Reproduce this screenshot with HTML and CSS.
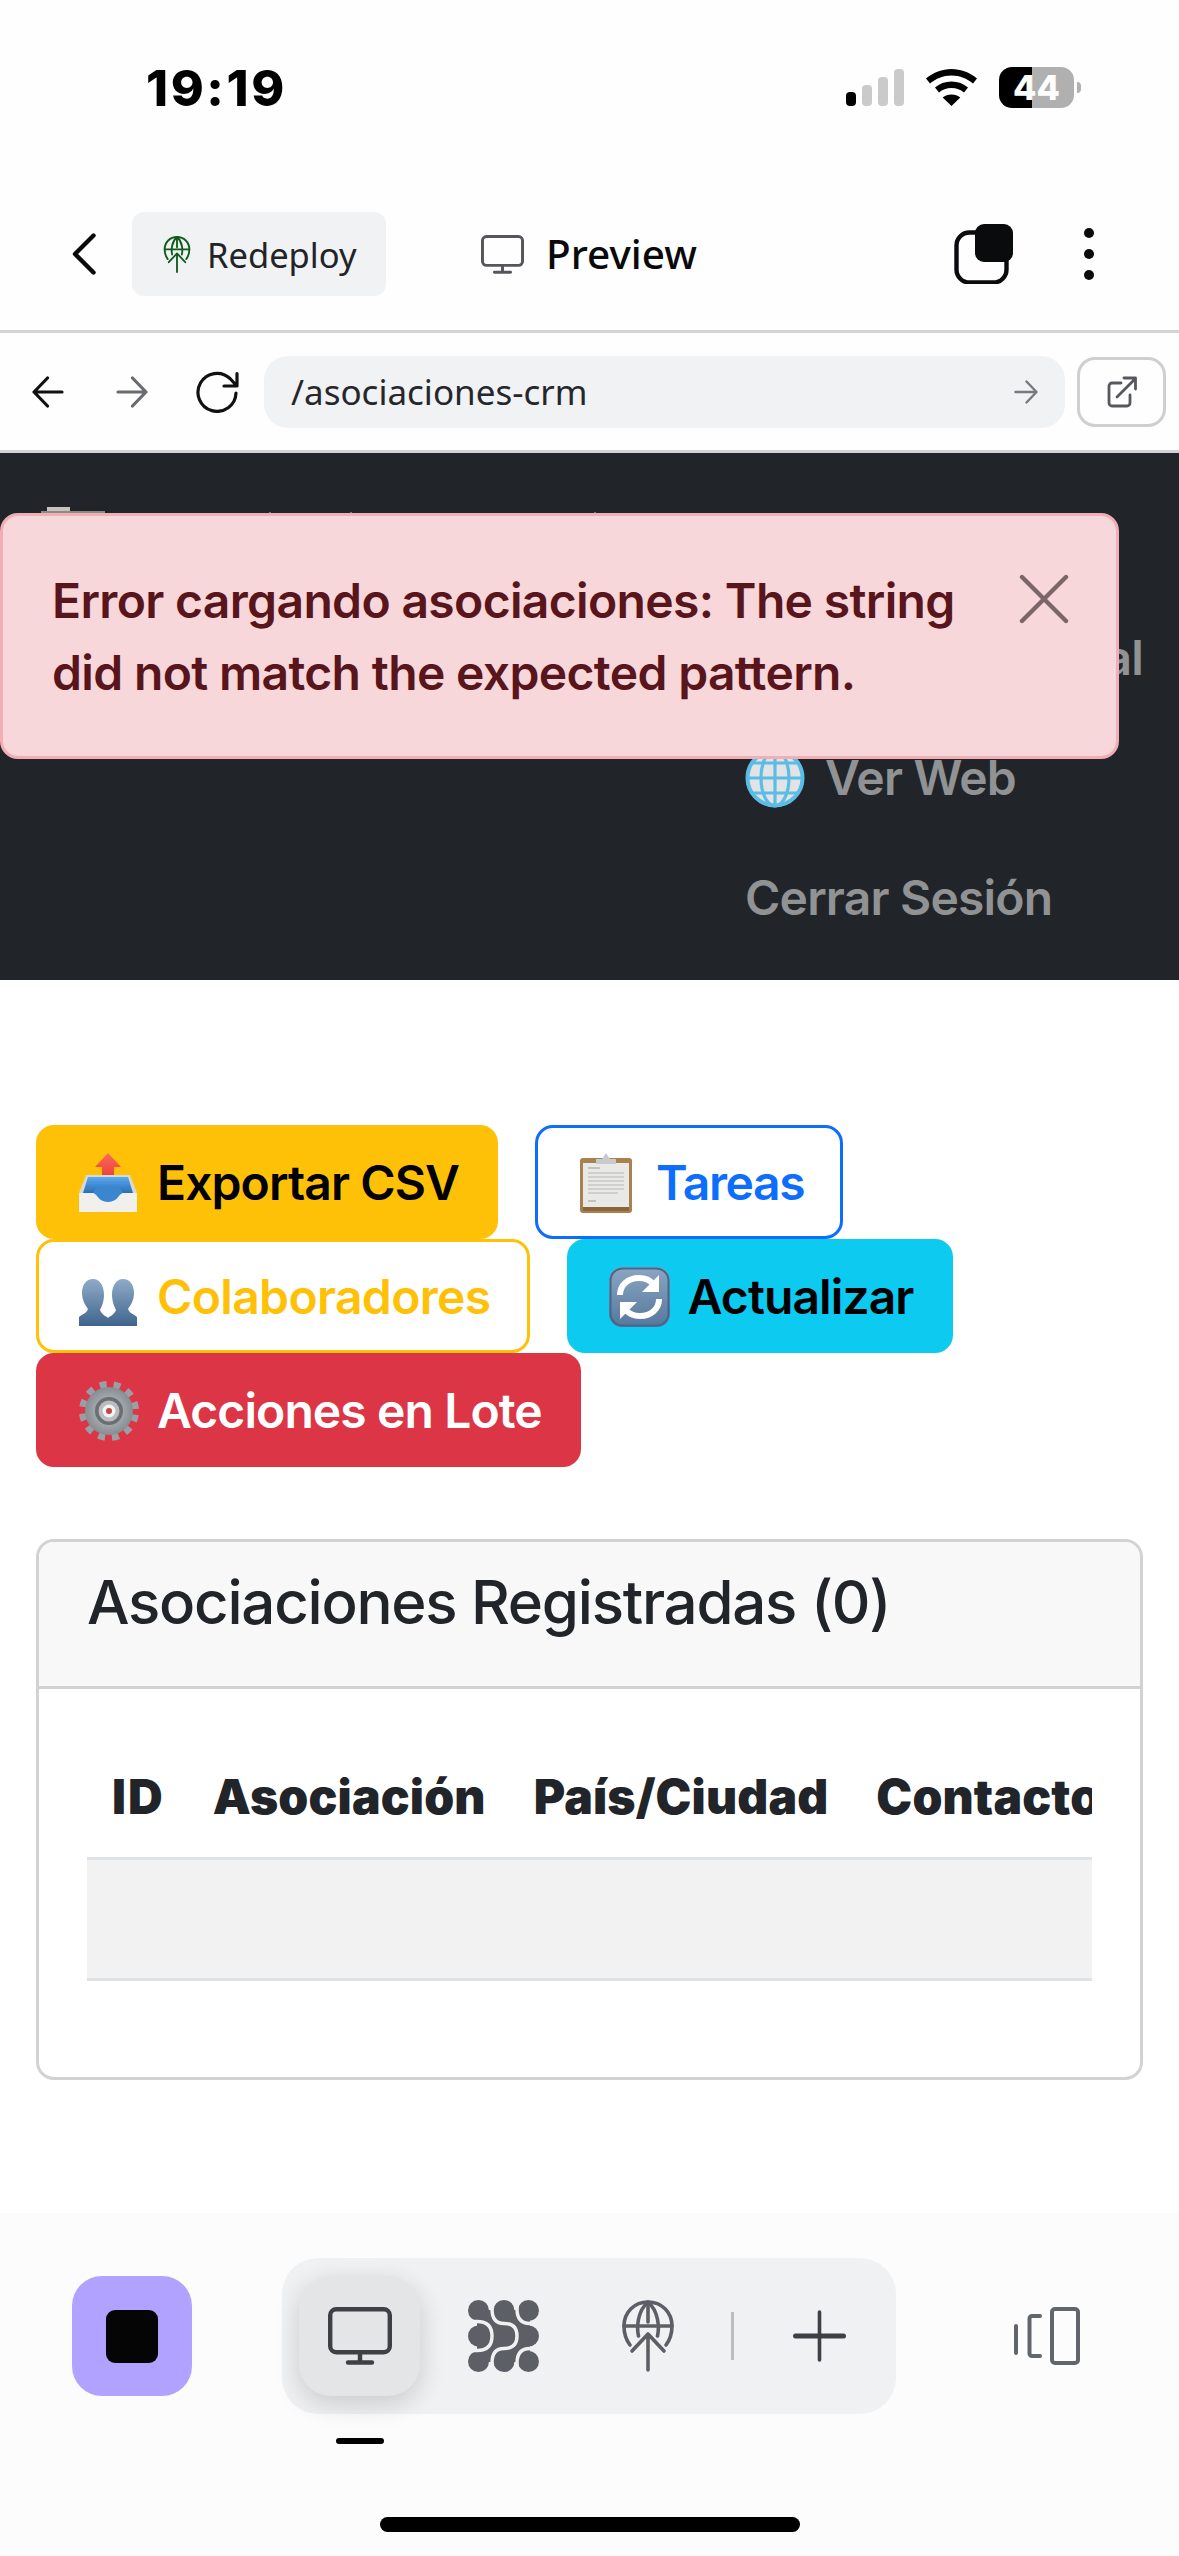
FILE: index.html
```html
<!DOCTYPE html>
<html lang="es">
<head>
<meta charset="utf-8">
<title>Asociaciones CRM</title>
<link rel="stylesheet" href="styles.css">
</head>
<body>
<svg class="defs" width="0" height="0" aria-hidden="true">
  <symbol id="i-monitor" viewBox="0 0 64 58">
    <rect x="2.2" y="2.2" width="59.6" height="43" rx="6" fill="none" stroke="currentColor" stroke-width="4.4"/>
    <path d="M32 46v9M20 55.5h24" fill="none" stroke="currentColor" stroke-width="4.4" stroke-linecap="round"/>
  </symbol>
  <symbol id="i-deploy" viewBox="0 0 52 72">
    <g fill="none" stroke="currentColor" stroke-width="3.6" stroke-linecap="round" stroke-linejoin="round">
      <path d="M8 45C3.500 39 2 33 2 26 2 12 12.500 2 26 2s24 10 24 24c0 7-1.500 13-6 19"/>
      <path d="M16.500 36C14.500 27 15.500 11 26 2c10.500 9 11.500 25 9.500 34"/>
      <path d="M26 2v20M2 26h48"/>
      <path d="M26 70V36M10 51l16-17 16 17"/>
    </g>
  </symbol>
</svg>

<div class="phone">
  <header class="status">
    <span class="time">19:19</span>
    <div class="status-icons">
      <div class="signal">
        <i class="bar bar-1"></i><i class="bar bar-2"></i><i class="bar bar-3"></i><i class="bar bar-4"></i>
      </div>
      <svg class="wifi" viewBox="0 0 51 37" aria-hidden="true">
        <path d="M25.500 0C16 0 7.500 3.500 0 9.500l4 5C10 9.500 17 6.500 25.500 6.500S41 9.500 47 14.500l4-5C43.500 3.500 35 0 25.500 0z"/>
        <path d="M25.500 12.500c-6.500 0-12 2.200-16.500 6l4 5c3.500-2.800 7.500-4.500 12.500-4.500s9 1.700 12.500 4.500l4-5c-4.500-3.800-10-6-16.500-6z"/>
        <path d="M25.500 25.500c-3.500 0-6.300 1-8.800 3l8.800 8.500 8.800-8.500c-2.500-2-5.300-3-8.800-3z"/>
      </svg>
      <div class="battery"><span>44</span></div>
      <i class="battery-nub"></i>
    </div>
  </header>

  <div class="topbar">
    <svg class="chevron" viewBox="0 0 24 42" aria-hidden="true"><path d="M21.500 2.500 3 21l18.500 18.500" fill="none" stroke="#0a0a0c" stroke-width="4.400" stroke-linecap="round" stroke-linejoin="round"/></svg>
    <div class="redeploy">
      <svg class="redeploy-icon"><use href="#i-deploy"/></svg>
      <span>Redeploy</span>
    </div>
    <div class="preview">
      <svg class="preview-icon"><use href="#i-monitor"/></svg>
      <span class="preview-label">Preview</span>
    </div>
    <svg class="layers" viewBox="0 0 60 60" aria-hidden="true">
      <rect x="2.500" y="8.500" width="50" height="50" rx="13" fill="none" stroke="#0a0b0d" stroke-width="4.400"/>
      <rect x="21" y="0" width="38" height="38" rx="9" fill="#0a0b0d"/>
    </svg>
    <svg class="kebab" viewBox="0 0 10 52" aria-hidden="true"><circle cx="5" cy="5" r="5"/><circle cx="5" cy="26" r="5"/><circle cx="5" cy="47" r="5"/></svg>
  </div>

  <div class="urlbar">
    <svg class="nav-arrow nav-back" viewBox="0 0 32 32" aria-hidden="true"><path d="M30 16H2M15.500 2 2 16l13.500 14" fill="none" stroke="#111" stroke-width="3.200" stroke-linecap="round" stroke-linejoin="round"/></svg>
    <svg class="nav-arrow nav-forward" viewBox="0 0 32 32" aria-hidden="true"><path d="M2 16h28M16.500 2 30 16 16.500 30" fill="none" stroke="#6a6b70" stroke-width="3.200" stroke-linecap="round" stroke-linejoin="round"/></svg>
    <svg class="reload" viewBox="0 0 44 42" aria-hidden="true"><path d="M41 22a19 19 0 1 1-6-14.500L41 14M42 2.500V15H29" fill="none" stroke="#111" stroke-width="3.200" stroke-linecap="round" stroke-linejoin="round"/></svg>
    <div class="address">
      <span>/asociaciones-crm</span>
      <svg class="go" viewBox="0 0 24 24" aria-hidden="true"><path d="M1.500 12h21M12.500 1.500 22.500 12l-10 10.500" fill="none" stroke="#77787d" stroke-width="2.400" stroke-linecap="round" stroke-linejoin="round"/></svg>
    </div>
    <div class="external">
      <svg viewBox="0 0 30 32" aria-hidden="true"><path d="M14 7H5a3 3 0 0 0-3 3v17a3 3 0 0 0 3 3h15a3 3 0 0 0 3-3v-8M10 21 28 3M17 2h11.500v11" fill="none" stroke="#56585e" stroke-width="2.800" stroke-linecap="round" stroke-linejoin="round"/></svg>
    </div>
  </div>

  <nav class="site-nav">
    <svg class="brand-peek" viewBox="0 0 560 6" aria-hidden="true">
      <rect x="6" y="0" width="23" height="6" fill="#c6c4bd"/>
      <rect x="0" y="4" width="64" height="2" fill="#8b8a85"/>
      <rect x="228" y="5" width="2" height="1" fill="#77797b"/>
      <rect x="309" y="5" width="2" height="1" fill="#77797b"/>
      <rect x="553" y="5" width="2" height="1" fill="#77797b"/>
    </svg>
    <ul class="nav-list">
      <li class="nav-item nav-item-first">Panel Principal</li>
      <li class="nav-item">
        <svg class="nav-emoji" viewBox="0 0 60 60" aria-hidden="true">
          <circle cx="30" cy="30" r="29" fill="#e2e3e5"/>
          <g fill="none" stroke="#5bbde6" stroke-width="3.200">
            <circle cx="30" cy="30" r="27.500" stroke-width="4"/>
            <ellipse cx="30" cy="30" rx="14" ry="28"/>
            <path d="M30 2v56M2 30h56M6 15h48M6 45h48"/>
          </g>
        </svg>
        <span>Ver Web</span>
      </li>
      <li class="nav-item">Cerrar Sesión</li>
    </ul>
  </nav>

  <div class="toast" role="alert">
    <p>Error cargando asociaciones: The string did not match the expected pattern.</p>
    <svg class="toast-close" viewBox="0 0 50 50" aria-hidden="true"><path d="M3 3l44 44M47 3 3 47" fill="none" stroke="#7c6569" stroke-width="4.400" stroke-linecap="round"/></svg>
  </div>

  <main class="content">
    <div class="actions">
      <button class="btn btn-warning">
        <svg class="emoji" viewBox="0 0 66 66" aria-hidden="true">
          <defs>
            <linearGradient id="g-tray" x1="0" y1="0" x2="0" y2="1"><stop offset="0" stop-color="#5aa9f2"/><stop offset="1" stop-color="#2a6fb5"/></linearGradient>
            <linearGradient id="g-up" x1="0" y1="0" x2="0" y2="1"><stop offset="0" stop-color="#fb6a5c"/><stop offset="1" stop-color="#ee3b30"/></linearGradient>
          </defs>
          <path d="M33 4 46 18H39V30H27V18H20z" fill="url(#g-up)"/>
          <path d="M11 26H55L62 44V63H4V44z" fill="#d9d9d4"/>
          <path d="M13 28H53L58 44H8z" fill="url(#g-tray)"/>
          <path d="M4 44H18C22 44 23 53 33 53S44 44 48 44H62V63H4z" fill="#f1f0ec"/>
          <path d="M18 44C22 44 23 53 33 53S44 44 48 44L44 38H22z" fill="#3b86cf"/>
        </svg>
        <span>Exportar CSV</span>
      </button>
      <button class="btn btn-outline-primary">
        <svg class="emoji" viewBox="0 0 66 66" aria-hidden="true">
          <rect x="6" y="9" width="52" height="55" rx="3" fill="#a8814f"/>
          <rect x="9" y="14" width="46" height="44" fill="#e9e9e7"/>
          <path d="M9 58H55V62H9z" fill="#8a673b"/>
          <path d="M22 10H28L32 4 36 10H42V15H22z" fill="#c9cacb"/>
          <path d="M14 24H50M14 28H50M14 32H50M14 36H50M14 40H50M14 44H44" stroke="#cfcfcf" stroke-width="2"/>
          <path d="M14 19H26M14 52H22" stroke="#b5b5b5" stroke-width="1.500"/>
        </svg>
        <span>Tareas</span>
      </button>
      <button class="btn btn-outline-warning">
        <svg class="emoji" viewBox="0 0 66 66" aria-hidden="true">
          <defs>
            <linearGradient id="g-bust" x1="0" y1="0" x2="0" y2="1"><stop offset="0" stop-color="#8fabc8"/><stop offset="1" stop-color="#3f648c"/></linearGradient>
          </defs>
          <path d="M18 16C25 16 29 23 29 32 29 39 26 45 25 47 27 52 31 53 33 55V63H4V54C7 51 11 51 13 46 11 43 7 38 7 30 7 22 11 16 18 16Z" fill="url(#g-bust)"/>
          <path d="M48 16C41 16 37 23 37 32 37 39 40 45 41 47 39 52 35 53 33 55V63H62V54C59 51 55 51 53 46 55 43 59 38 59 30 59 22 55 16 48 16Z" fill="url(#g-bust)"/>
        </svg>
        <span>Colaboradores</span>
      </button>
      <button class="btn btn-info">
        <svg class="emoji" viewBox="0 0 66 66" aria-hidden="true">
          <defs>
            <linearGradient id="g-sync" x1="0" y1="0" x2="0" y2="1"><stop offset="0" stop-color="#8ba6c2"/><stop offset="1" stop-color="#56789c"/></linearGradient>
          </defs>
          <rect x="3" y="4" width="61" height="60" rx="13" fill="url(#g-sync)"/>
          <rect x="4.500" y="5.500" width="58" height="57" rx="12" fill="none" stroke="#47668a" stroke-width="2"/>
          <path d="M14 32C14 22 22 15 33 15 39 15 44 17 47 21" fill="none" stroke="#fff" stroke-width="6"/>
          <path d="M53 12V29H36z" fill="#fff"/>
          <path d="M53 36C53 46 45 53 34 53 28 53 23 51 20 47" fill="none" stroke="#fff" stroke-width="6"/>
          <path d="M14 56V39H31z" fill="#fff"/>
        </svg>
        <span>Actualizar</span>
      </button>
      <button class="btn btn-danger">
        <svg class="emoji" viewBox="0 0 66 66" aria-hidden="true">
          <defs>
            <radialGradient id="g-gear"><stop offset="0" stop-color="#c9ccd0"/><stop offset="1" stop-color="#868c92"/></radialGradient>
          </defs>
          <circle cx="34" cy="34" r="25" fill="none" stroke="#9a9fa5" stroke-width="10" stroke-dasharray="6.500 6.600" transform="rotate(8 34 34)"/>
          <circle cx="34" cy="34" r="24" fill="url(#g-gear)"/>
          <circle cx="34" cy="34" r="14" fill="#6a6f75"/>
          <circle cx="34" cy="34" r="10.500" fill="#b9bcc0"/>
          <circle cx="34" cy="34" r="6.500" fill="#f3f3f3"/>
          <circle cx="34" cy="34" r="3" fill="#c5453f"/>
        </svg>
        <span>Acciones en Lote</span>
      </button>
    </div>

    <section class="card">
      <div class="card-header"><h5>Asociaciones Registradas (0)</h5></div>
      <div class="card-body">
        <div class="table-wrap">
          <table>
            <thead>
              <tr><th>ID</th><th>Asociación</th><th>País/Ciudad</th><th>Contacto</th><th>Estado</th><th>Acciones</th></tr>
            </thead>
            <tbody>
              <tr><td colspan="6">&nbsp;</td></tr>
            </tbody>
          </table>
        </div>
      </div>
    </section>
  </main>

  <footer class="toolbar">
    <div class="toolbar-row">
      <div class="stop"><i></i></div>
      <div class="tabs">
        <div class="tab tab-active"><svg class="tab-monitor"><use href="#i-monitor"/></svg></div>
        <div class="tab">
          <svg class="tab-dots" viewBox="0 0 71 72" aria-hidden="true">
            <g fill="#5d5f66">
              <ellipse cx="10.500" cy="10.500" rx="10.500" ry="10.500"/><ellipse cx="36" cy="10.500" rx="10.500" ry="10.500"/><ellipse cx="60.500" cy="10.500" rx="10.500" ry="10.500"/>
              <ellipse cx="10.500" cy="36" rx="10.500" ry="10.500"/><ellipse cx="60.500" cy="36" rx="10.500" ry="10.500"/>
              <ellipse cx="10.500" cy="61.500" rx="10.500" ry="10.500"/><ellipse cx="36" cy="61.500" rx="10.500" ry="10.500"/><ellipse cx="60.500" cy="61.500" rx="10.500" ry="10.500"/>
              <rect x="9" y="10" width="53" height="52"/>
            </g>
            <g fill="none" stroke="#f0f1f3" stroke-width="3.400">
              <path d="M0 21.500H9C19 21.500 24 26 24 36S19 50.500 9 50.500H0"/>
              <path d="M24 0V9C24 19 28 23.500 36 23.500 45 23.500 49 28 49 36S45 48.500 36 48.500C28 48.500 24 53 24 63V72"/>
              <path d="M49 0V9C49 19 54 23.500 62 23.500H71"/>
              <path d="M49 72V63C49 53 54 48.500 62 48.500H71"/>
            </g>
          </svg>
        </div>
        <div class="tab"><svg class="tab-deploy"><use href="#i-deploy"/></svg></div>
        <i class="tab-sep"></i>
        <div class="tab">
          <svg class="tab-plus" viewBox="0 0 53 52" aria-hidden="true"><path d="M26.500 2v48" stroke="#3f4046" stroke-width="3.600" stroke-linecap="round"/><path d="M2.500 26h48" stroke="#3f4046" stroke-width="5" stroke-linecap="round"/></svg>
        </div>
      </div>
      <svg class="devices" viewBox="0 0 67 58" aria-hidden="true">
        <rect x="39" y="2" width="26" height="54" rx="3" fill="none" stroke="#63656c" stroke-width="4"/>
        <path d="M27 9h-8a2.500 2.500 0 0 0-2.500 2.500v35A2.500 2.500 0 0 0 19 49h8" fill="none" stroke="#63656c" stroke-width="4" stroke-linecap="round"/>
        <path d="M3 19v27" stroke="#63656c" stroke-width="4" stroke-linecap="round"/>
      </svg>
    </div>
    <i class="tab-indicator"></i>
    <i class="home-bar"></i>
  </footer>
</div>
</body>
</html>
```

FILE: styles.css
```css
* { box-sizing: border-box; }
html, body { margin: 0; padding: 0; }
body { background: #fff; font-family: Inter, "Liberation Sans", sans-serif; }
.defs { display: block; height: 0; width: 0; overflow: hidden; }

.phone {
  position: relative;
  width: 1179px;
  height: 2556px;
  display: flex;
  flex-direction: column;
  overflow: hidden;
  background: #fff;
}

/* Status bar */
.status {
  height: 178px;
  flex: none;
  display: flex;
  align-items: flex-start;
  justify-content: space-between;
  padding: 60px 98px 0 146px;
  background: #fefefe;
}
.time { font-size: 50px; line-height: 56px; font-weight: 800; color: #000; letter-spacing: 2.6px; }
.status-icons { display: flex; align-items: center; height: 41px; margin-top: 7px; }
.signal { display: flex; align-items: flex-end; gap: 6px; height: 37px; }
.bar { display: block; width: 10px; border-radius: 4px; background: #cacaca; }
.bar-1 { height: 14px; background: #000; }
.bar-2 { height: 21px; }
.bar-3 { height: 29px; }
.bar-4 { height: 37px; }
.wifi { width: 51px; height: 37px; margin-left: 22px; fill: #000; }
.battery {
  width: 75px;
  height: 41px;
  margin-left: 22px;
  border-radius: 13px;
  background: linear-gradient(90deg, #000 44%, #b0b0b0 44%);
  display: flex;
  align-items: center;
  justify-content: center;
}
.battery span { color: #fff; font-size: 34px; line-height: 41px; font-weight: 800; }
.battery-nub { display: block; width: 4px; height: 11px; margin-left: 3px; border-radius: 0 5px 5px 0; background: #b0b0b0; }

/* Builder top bar */
.topbar {
  height: 155px;
  flex: none;
  display: flex;
  align-items: center;
  padding: 0 85px 0 72px;
  background: #fefefe;
  border-bottom: 3px solid #d4d4d6;
  font-family: "Noto Sans", sans-serif;
}
.chevron { width: 24px; height: 42px; flex: none; }
.redeploy {
  width: 254px;
  height: 84px;
  margin-left: 36px;
  padding-left: 31px;
  display: flex;
  align-items: center;
  gap: 16px;
  border-radius: 12px;
  background: #f1f2f4;
  color: #222327;
  font-size: 34.5px;
}
.redeploy-icon { width: 28px; height: 37px; color: #0f5c1c; flex: none; }
.preview { margin-left: 95px; display: flex; align-items: center; gap: 22px; color: #0a0a0c; font-size: 40.5px; font-weight: 500; }
.preview-label { padding-bottom: 2px; }
.preview-icon { width: 43px; height: 39px; color: #55565c; flex: none; }
.layers { width: 60px; height: 60px; margin-left: auto; flex: none; }
.kebab { width: 10px; height: 52px; margin-left: 70px; fill: #0a0b0d; flex: none; }

/* URL bar */
.urlbar {
  height: 120px;
  flex: none;
  display: flex;
  align-items: center;
  padding-left: 32px;
  background: #fefefe;
  border-bottom: 3px solid #d4d4d6;
  font-family: "Noto Sans", sans-serif;
}
.nav-arrow { width: 32px; height: 32px; flex: none; }
.nav-forward { margin-left: 52px; }
.reload { width: 44px; height: 42px; margin-left: 47px; flex: none; }
.address {
  width: 801px;
  height: 72px;
  margin-left: 25px;
  padding: 0 27px 0 27px;
  display: flex;
  align-items: center;
  justify-content: space-between;
  border-radius: 24px;
  background: #f1f2f4;
  color: #26272b;
  font-size: 35px;
}
.go { width: 24px; height: 24px; flex: none; }
.external {
  width: 89px;
  height: 70px;
  margin-left: 12px;
  display: flex;
  align-items: center;
  justify-content: center;
  border: 3px solid #cfcfd1;
  border-radius: 18px;
}
.external svg { width: 30px; height: 32px; }

/* Dark site nav */
.site-nav {
  height: 527px;
  flex: none;
  padding: 54px 0 0 41px;
  background: #212529;
  color: #909294;
}
.brand-peek { display: block; width: 560px; height: 6px; }
.nav-list { list-style: none; margin: 85px 0 0 704px; padding: 0; width: 434px; }
.nav-item {
  height: 120px;
  display: flex;
  align-items: center;
  gap: 20px;
  font-size: 48px;
  font-weight: 600;
  line-height: 72px;
  letter-spacing: -0.8px;
  white-space: nowrap;
}
.nav-item-first { margin-left: 66px; }
.nav-emoji { width: 60px; height: 60px; flex: none; }

/* Toast sits above the nav */
.toast {
  position: absolute;
  left: 0;
  top: 513px;
  width: 1119px;
  height: 246px;
  padding: 49px 47px 47px 49px;
  display: flex;
  justify-content: space-between;
  background: #f8d7da;
  border: 3px solid #f1aeb5;
  border-radius: 18px;
  color: #58151c;
  font-size: 48px;
  font-weight: 600;
  line-height: 72px;
  letter-spacing: -0.65px;
}
.toast p { margin: 0; width: 930px; }
.toast-close { width: 50px; height: 50px; flex: none; margin-top: 9px; }

/* Content */
.content { flex: none; padding: 145px 36px 0; background: #fff; }
.actions { display: flex; flex-wrap: wrap; column-gap: 37px; }
.btn {
  height: 114px;
  display: flex;
  align-items: center;
  gap: 16px;
  padding: 0 36px;
  border: 3px solid transparent;
  border-radius: 18px;
  background: none;
  font-family: Inter, sans-serif;
  font-size: 48px;
  font-weight: 600;
  letter-spacing: -0.9px;
  white-space: nowrap;
}
.emoji { width: 66px; height: 66px; flex: none; }
.btn-warning { background: #ffc107; border-color: #ffc107; color: #000; }
.btn-outline-primary { background: #fff; border-color: #0d6efd; color: #0d6efd; letter-spacing: -1.4px; }
.btn-outline-warning { background: #fff; border-color: #ffc107; color: #ffc107; letter-spacing: -0.65px; }
.btn-info { background: #0dcaf0; border-color: #0dcaf0; color: #000; }
.btn-danger { background: #dc3545; border-color: #dc3545; color: #fff; }

.card {
  margin-top: 72px;
  height: 541px;
  border: 3px solid #d2d2d3;
  border-radius: 18px;
  overflow: hidden;
  background: #fff;
}
.card-header {
  height: 147px;
  padding: 24px 48px;
  background: #f8f8f8;
  border-bottom: 3px solid #d2d2d3;
}
.card-header h5 { margin: 0; font-size: 60px; line-height: 72px; font-weight: 500; letter-spacing: -1.25px; color: #212529; }
.card-body { padding: 48px; }
.table-wrap { overflow: hidden; }
table { border-collapse: separate; border-spacing: 0; color: #212529; white-space: nowrap; }
th { height: 123px; padding: 24px; font-size: 48px; line-height: 72px; font-weight: 900; letter-spacing: 0.15px; text-align: left; border-bottom: 3px solid #dfe2e6; }
th:first-child { padding-left: 25px; letter-spacing: 2px; }
td { height: 121px; padding: 23px 24px; background: #f2f2f2; border-bottom: 3px solid #dfe2e6; font-size: 48px; line-height: 72px; }

/* Bottom toolbar */
.toolbar {
  margin-top: auto;
  height: 343px;
  flex: none;
  display: flex;
  flex-direction: column;
  padding-top: 45px;
  background: #fcfcfc;
}
.toolbar-row { display: flex; align-items: center; height: 156px; padding-left: 72px; flex: none; }
.stop {
  width: 120px;
  height: 120px;
  display: flex;
  align-items: center;
  justify-content: center;
  border-radius: 30px;
  background: #b1a2ff;
  flex: none;
}
.stop i { display: block; width: 52px; height: 53px; border-radius: 9px; background: #050505; }
.tabs {
  width: 614px;
  height: 156px;
  margin-left: 90px;
  padding: 0 17px;
  display: flex;
  align-items: center;
  gap: 23px;
  border-radius: 36px;
  background: #f0f1f3;
  flex: none;
}
.tab { width: 121px; height: 120px; display: flex; align-items: center; justify-content: center; flex: none; border-radius: 32px; }
.tab:last-child { margin-left: 2px; }
.tab-active { background: #e4e5e7; box-shadow: 0 8px 26px rgba(0, 0, 0, 0.16); }
.tab-monitor { width: 64px; height: 58px; color: #3f4046; }
.tab-dots { width: 71px; height: 72px; }
.tab-deploy { width: 52px; height: 72px; color: #5d5f66; }
.tab-sep { display: block; width: 3px; height: 48px; background: #bdbdc0; flex: none; }
.tab-plus { width: 53px; height: 52px; }
.devices { width: 67px; height: 58px; margin-left: 117px; flex: none; }
.tab-indicator { display: block; width: 48px; height: 6px; margin: 24px 0 0 336px; border-radius: 3px; background: #000; flex: none; }
.home-bar { display: block; width: 420px; height: 15px; margin: 73px 0 0 380px; border-radius: 8px; background: #000; flex: none; }
```
